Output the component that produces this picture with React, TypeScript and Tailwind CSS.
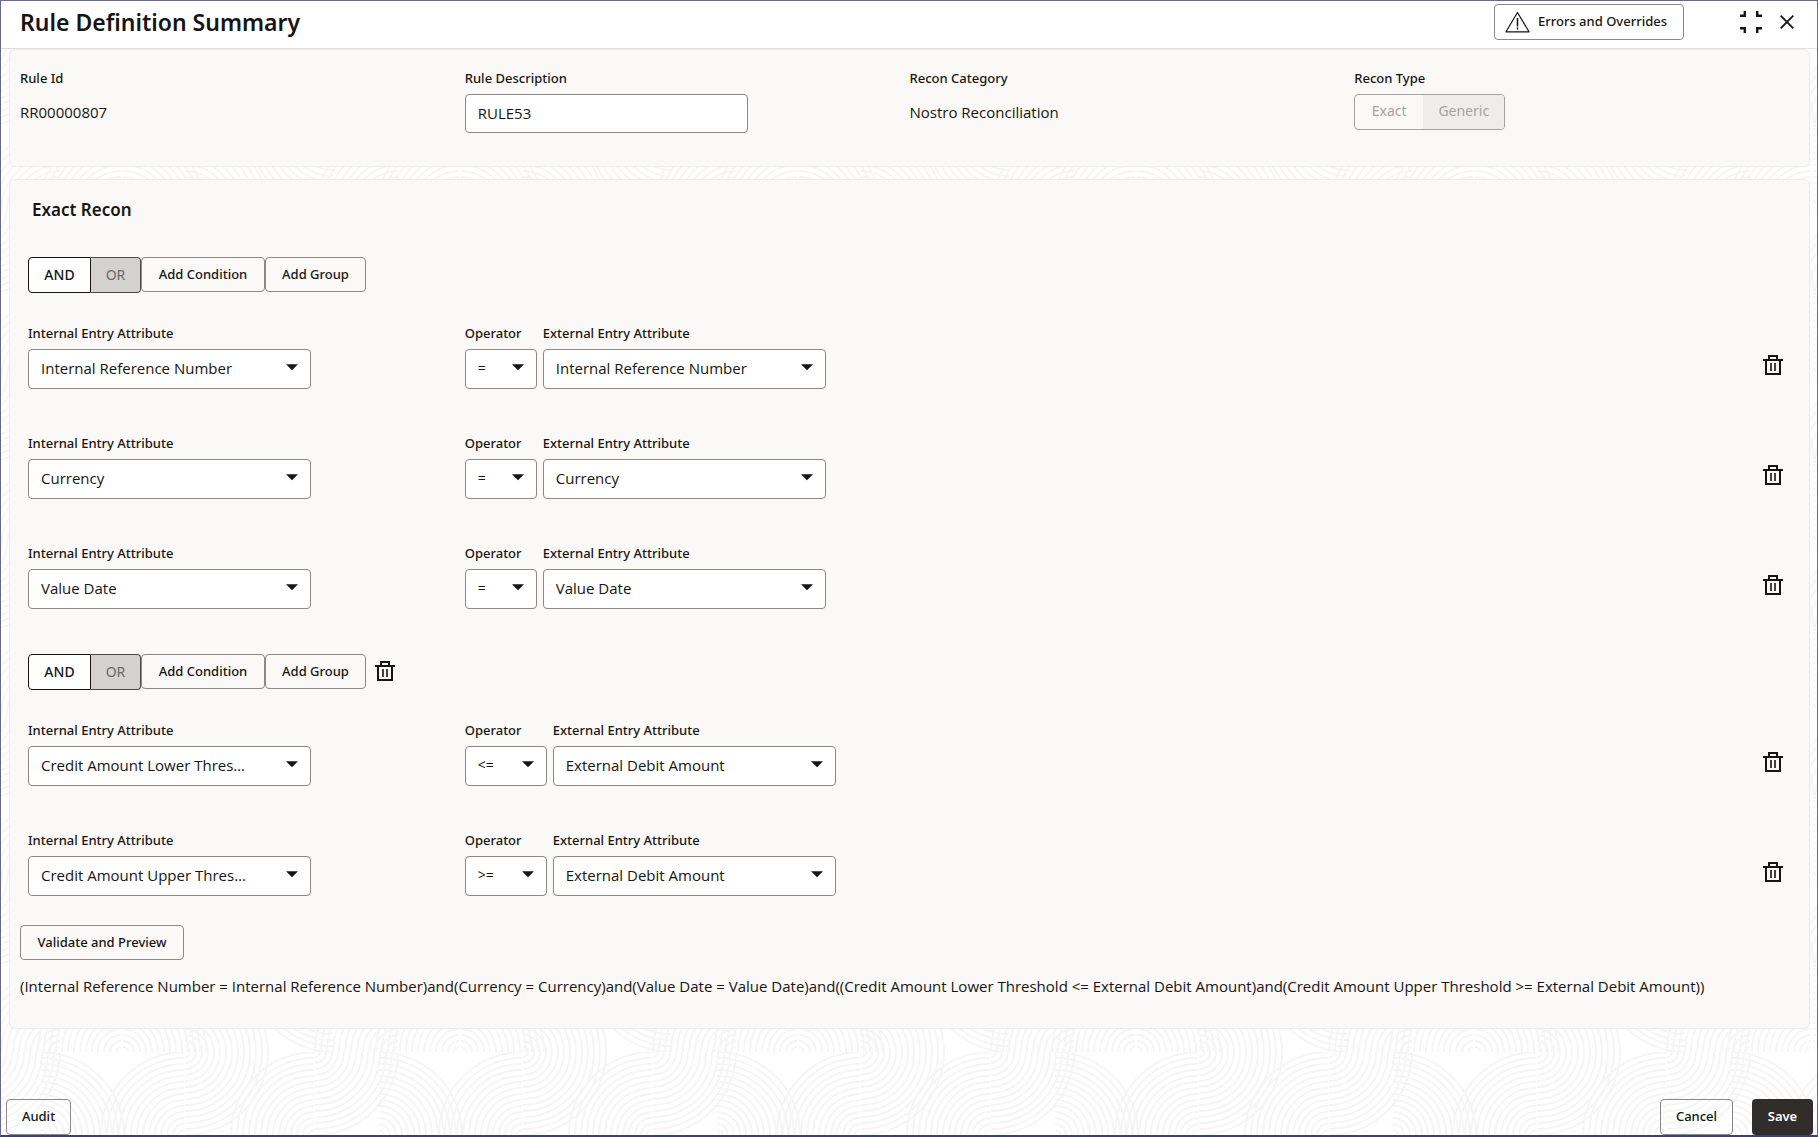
import { useId, useState } from "react";
import type { ReactNode } from "react";

const SANS = "font-['Noto_Sans',sans-serif]";
const BODY = "font-['Open_Sans',sans-serif] text-[15px]";
const LABEL = "block text-[13px] leading-5 font-medium";
const BUTTON =
  "flex items-center justify-center rounded border border-[#8b8986] text-[13px] font-medium whitespace-nowrap";

function rings(cx: number, cy: number, sx: number, sy: number) {
  const out: ReactNode[] = [];
  for (let r = 5; r <= 83; r += 6) {
    const x = cx + sx * r;
    const y = cy + sy * r;
    const sweep = sx * sy > 0 ? 1 : 0;
    out.push(
      <path key={`${cx}-${cy}-${sx}-${sy}-${r}`} d={`M${x} ${cy}A${r} ${r} 0 0 ${sweep} ${cx} ${y}`} />,
    );
  }
  return out;
}

function Backdrop() {
  const id = useId();
  return (
    <svg className="absolute inset-0 h-full w-full" aria-hidden="true">
      <defs>
        <pattern id={id} width="338" height="168" y="43" patternUnits="userSpaceOnUse">
          <g fill="none" stroke="#f5f5f5" strokeWidth="2">
            {rings(40, 83, 1, -1)}
            {rings(183, 83, -1, -1)}
            {rings(184, 0, 1, 1)}
            {rings(313, 83, -1, -1)}
            {rings(314, 0, 1, 1)}
            {rings(-24, 0, 1, 1)}
            {rings(59, 168, -1, -1)}
            {rings(120, 168, -1, -1)}
            {rings(122, 168, 1, -1)}
            {rings(184, 168, 1, -1)}
            {rings(397, 168, -1, -1)}
            {rings(332, 85, -1, 1)}
          </g>
        </pattern>
      </defs>
      <rect width="100%" height="100%" fill={`url(#${id})`} />
    </svg>
  );
}

function TrashIcon() {
  return (
    <svg width="20" height="20" viewBox="0 0 20 20" fill="none" stroke="#161513" strokeWidth="2" aria-hidden="true">
      <path d="M0 5H20M6 5V1H14V5M3 5V19H17V5" />
      <path d="M8 8V16M12 8V16" strokeWidth="1.6" />
    </svg>
  );
}

function WarningIcon() {
  return (
    <svg width="25" height="22" viewBox="0 0 25 22" fill="none" stroke="#161513" strokeWidth="1.2" aria-hidden="true">
      <path d="M12.5 1.5L24 20.8H1Z" strokeLinejoin="round" />
      <path d="M12.5 7V15.5M12.5 16.6V18.4" strokeWidth="1.5" />
    </svg>
  );
}

function CollapseIcon() {
  return (
    <svg width="22" height="22" viewBox="0 0 22 22" fill="none" stroke="#161513" strokeWidth="2.4" aria-hidden="true">
      <path d="M0 4.8H4.8V0M17.2 0V4.8H22M0 17.2H4.8V22M17.2 22V17.2H22" />
    </svg>
  );
}

function CloseIcon() {
  return (
    <svg width="14" height="14" viewBox="0 0 14 14" fill="none" stroke="#161513" strokeWidth="1.8" aria-hidden="true">
      <path d="M0.7 0.7L13.3 13.3M13.3 0.7L0.7 13.3" />
    </svg>
  );
}

function SelectField({ label, value, wide }: { label: string; value: string; wide: string }) {
  const id = useId();
  return (
    <div className={wide}>
      <label htmlFor={id} className={`${LABEL} whitespace-nowrap`}>
        {label}
      </label>
      <div className="relative mt-1.5">
        <select
          id={id}
          defaultValue={value}
          className={`block h-10 w-full appearance-none overflow-hidden rounded border border-[#8b8986] bg-white pb-0.5 pl-3 font-['Open_Sans',sans-serif] text-ellipsis whitespace-nowrap ${
            label === "Operator" ? "pr-6 text-sm" : "pr-[62px] text-[15px]"
          }`}
        >
          <option>{value}</option>
        </select>
        <svg
          className="pointer-events-none absolute top-[15px] right-[13px]"
          width="12"
          height="7"
          viewBox="0 0 12 7"
          aria-hidden="true"
        >
          <path d="M0 0.3H12L6 6.3Z" fill="#161513" />
        </svg>
      </div>
    </div>
  );
}

function Condition({ left, op, right }: { left: string; op: string; right: string }) {
  const compound = op.length > 1;
  return (
    <div className="flex h-[110px] items-start">
      <div className="w-1/4 pl-2">
        <SelectField label="Internal Entry Attribute" value={left} wide="w-[283px]" />
      </div>
      <div className="flex flex-1 gap-1.5">
        <SelectField label="Operator" value={op} wide={compound ? "w-[82px]" : "w-[72px]"} />
        <SelectField label="External Entry Attribute" value={right} wide="w-[283px]" />
      </div>
      <button type="button" aria-label="Delete condition" className="mt-8 mr-4">
        <TrashIcon />
      </button>
    </div>
  );
}

function Toolbar({ removable }: { removable?: boolean }) {
  const [mode, setMode] = useState("AND");
  return (
    <div className="flex h-9 items-start pl-2">
      <button
        type="button"
        aria-pressed={mode === "AND"}
        onClick={() => setMode("AND")}
        className="h-9 w-[63px] rounded-l border border-[#161513] bg-white text-sm font-medium"
      >
        AND
      </button>
      <button
        type="button"
        aria-pressed={mode === "OR"}
        onClick={() => setMode("OR")}
        className="h-9 w-[50px] rounded-r border border-l-0 border-[#4b4a48] bg-[#d4d2d0] text-sm text-[#6b6966]"
      >
        OR
      </button>
      <button type="button" className={`${BUTTON} h-[35px] w-[124px]`}>
        Add Condition
      </button>
      <button type="button" className={`${BUTTON} h-[35px] w-[101px]`}>
        Add Group
      </button>
      {removable && (
        <button type="button" aria-label="Delete group" className="mt-[7px] ml-[9px]">
          <TrashIcon />
        </button>
      )}
    </div>
  );
}

export default function App() {
  return (
    <div
      className={`${SANS} relative flex min-h-screen flex-col border border-[#66689a] border-b-2 border-b-[#3b4468] bg-white text-[#161513]`}
    >
      <Backdrop />
      <header className="relative flex h-12 items-center border-b border-[#e1dfdc] bg-white pr-[23px] pb-1.5 pl-[19px]">
        <h1 className="flex-1 text-[23px] leading-8 font-semibold">Rule Definition Summary</h1>
        <button
          type="button"
          className="mr-14 flex h-9 w-[190px] items-center gap-2 rounded border border-[#8b8986] pl-2.5 text-[13px] font-medium whitespace-nowrap"
        >
          <WarningIcon />
          Errors and Overrides
        </button>
        <button type="button" aria-label="Exit full screen" className="mr-[18px]">
          <CollapseIcon />
        </button>
        <button type="button" aria-label="Close">
          <CloseIcon />
        </button>
      </header>

      <main className="relative mr-[7px] ml-2 flex flex-1 flex-col">
        <section className="grid h-[118px] grid-cols-4 rounded-md border border-[#efedeb] bg-[#fbf9f8] px-2.5 pt-[18px]">
          <div>
            <span className={LABEL}>Rule Id</span>
            <span className={`${BODY} mt-1 flex h-10 items-center`}>RR00000807</span>
          </div>
          <div>
            <label htmlFor="rule-description" className={LABEL}>
              Rule Description
            </label>
            <input
              id="rule-description"
              defaultValue="RULE53"
              className={`${BODY} mt-1.5 block h-[39px] w-[283px] rounded border border-[#8b8986] bg-white px-3 pb-0.5`}
            />
          </div>
          <div>
            <span className={LABEL}>Recon Category</span>
            <span className={`${BODY} mt-1 flex h-10 items-center`}>Nostro Reconciliation</span>
          </div>
          <div>
            <span className={LABEL}>Recon Type</span>
            <div className="mt-1.5 flex h-9 w-[151px] overflow-hidden rounded border border-[#a5a3a1] text-sm text-[#a5a3a1]">
              <button type="button" disabled className="w-[68px] pb-0.5">
                Exact
              </button>
              <button type="button" disabled className="flex-1 bg-[#efedeb] pb-0.5">
                Generic
              </button>
            </div>
          </div>
        </section>

        <section className="mt-3 h-[850px] rounded-md border border-[#efedeb] bg-[#fbf9f8] px-2.5 pt-4">
          <h2 className="pl-3 text-[17px] leading-7 font-semibold">Exact Recon</h2>
          <div className="mt-[33px]">
            <Toolbar />
          </div>
          <div className="mt-[30px] mb-px">
            <Condition left="Internal Reference Number" op="=" right="Internal Reference Number" />
            <Condition left="Currency" op="=" right="Currency" />
            <Condition left="Value Date" op="=" right="Value Date" />
          </div>
          <Toolbar removable />
          <div className="mt-[30px]">
            <Condition left="Credit Amount Lower Threshold" op="<=" right="External Debit Amount" />
            <Condition left="Credit Amount Upper Threshold" op=">=" right="External Debit Amount" />
          </div>
          <button type="button" className={`${BUTTON} -mt-[15px] h-[35px] w-[164px]`}>
            Validate and Preview
          </button>
          <p className={`${BODY} mt-3.5 leading-6`}>
            (Internal Reference Number = Internal Reference Number)and(Currency = Currency)and(Value Date = Value
            Date)and((Credit Amount Lower Threshold &lt;= External Debit Amount)and(Credit Amount Upper Threshold
            &gt;= External Debit Amount))
          </p>
        </section>
      </main>

      <footer className="relative flex h-9 items-start pr-1 pl-[5px]">
        <button type="button" className={`${BUTTON} h-9 w-[65px]`}>
          Audit
        </button>
        <button type="button" className={`${BUTTON} mr-[19px] ml-auto h-9 w-[73px]`}>
          Cancel
        </button>
        <button
          type="button"
          className="flex h-9 w-[61px] items-center justify-center rounded bg-[#312d2a] text-[13px] font-semibold text-white"
        >
          Save
        </button>
      </footer>
    </div>
  );
}
